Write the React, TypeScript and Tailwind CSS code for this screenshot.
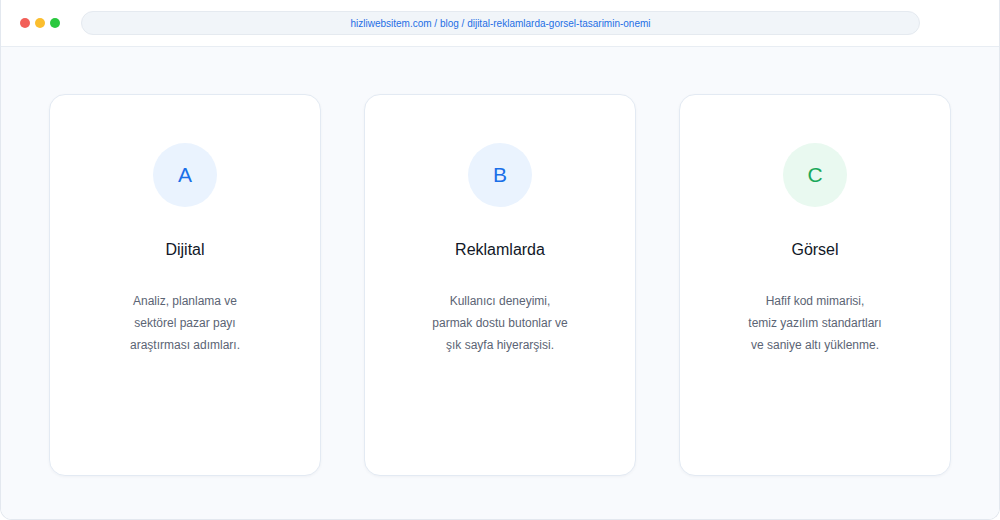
import React from 'react';

const cards = [
  {
    letter: 'A',
    title: 'Dijital',
    lines: ['Analiz, planlama ve', 'sektörel pazar payı', 'araştırması adımları.'],
    tone: 'bg-[#eaf3fe] text-[#1a6fe8]',
  },
  {
    letter: 'B',
    title: 'Reklamlarda',
    lines: ['Kullanıcı deneyimi,', 'parmak dostu butonlar ve', 'şık sayfa hiyerarşisi.'],
    tone: 'bg-[#eaf3fe] text-[#1a6fe8]',
  },
  {
    letter: 'C',
    title: 'Görsel',
    lines: ['Hafif kod mimarisi,', 'temiz yazılım standartları', 've saniye altı yüklenme.'],
    tone: 'bg-[#e9f9f0] text-[#1aa85a]',
  },
];

function Card({ letter, title, lines, tone }: any) {
  return (
    <div className="bg-white rounded-2xl border border-[#e3eaf3] shadow-[0_1px_3px_rgba(15,23,42,0.04)] h-[382px] flex flex-col items-center pt-[48px]">
      <div className={`w-16 h-16 rounded-full flex items-center justify-center text-[21px] ${tone}`}>
        {letter}
      </div>
      <h3 className="mt-[31px] text-[16px] leading-6 text-[#111827]">{title}</h3>
      <p className="mt-[28px] text-[12px] leading-[22px] text-[#5b6474] text-center">
        {lines.map((l: string, i: number) => (
          <React.Fragment key={i}>
            {l}
            {i < lines.length - 1 && <br />}
          </React.Fragment>
        ))}
      </p>
    </div>
  );
}

export default function App() {
  return (
    <div className="w-[1000px] h-[520px] bg-white font-['Liberation_Sans',Arial,sans-serif]">
      <div className="h-full flex flex-col border border-t-0 border-[#e3e8ef] rounded-b-xl overflow-hidden">
        <div className="h-[47px] shrink-0 bg-white border-b border-[#e8edf3] flex items-center pl-[19px] pr-[79px]">
          <div className="flex gap-[5px]">
            <span className="w-[10px] h-[10px] rounded-full bg-[#f25f58]" />
            <span className="w-[10px] h-[10px] rounded-full bg-[#fbbe2e]" />
            <span className="w-[10px] h-[10px] rounded-full bg-[#2ac83f]" />
          </div>
          <div className="ml-[21px] flex-1 h-[24px] rounded-full bg-[#f1f5f9] border border-[#e5eaf0] flex items-center justify-center text-[10px] text-[#1f6fe5]">
            hizliwebsitem.com / blog / dijital-reklamlarda-gorsel-tasarimin-onemi
          </div>
        </div>
        <div className="flex-1 bg-[#f8fafd] grid grid-cols-3 gap-[43px] px-[48px] pt-[47px]">
          {cards.map((c) => (
            <Card key={c.letter} {...c} />
          ))}
        </div>
      </div>
    </div>
  );
}
